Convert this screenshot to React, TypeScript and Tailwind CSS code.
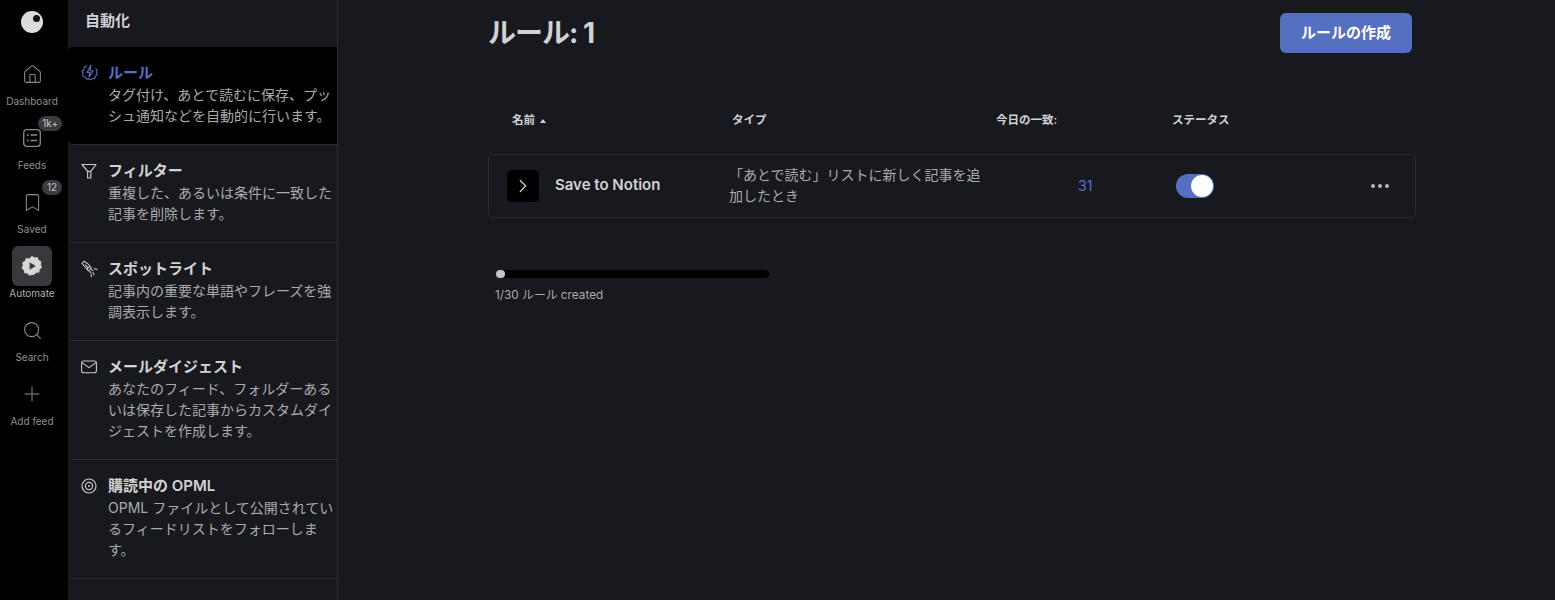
import React from 'react';
import { House, Bookmark, Search, Plus, ChevronRight } from 'lucide-react';

const FeedsIcon = () => (
    <svg width="20" height="20" viewBox="0 0 20 20" fill="none" stroke="currentColor" strokeWidth="1.3" strokeLinecap="round">
        <rect x="1.7" y="1.7" width="16.6" height="16.6" rx="3" />
        <path d="M9 7h5.5M9 12.5h5.5" />
        <circle cx="5.8" cy="7" r="0.9" fill="currentColor" stroke="none" />
        <circle cx="5.8" cy="12.5" r="0.9" fill="currentColor" stroke="none" />
    </svg>
);

const AutomateIcon = () => (
    <svg width="22" height="22" viewBox="0 0 22 22">
        <path fill="#d6d6d8" d="M11 1l2.6 1.6 3-.3 1.2 2.8 2.6 1.5-.6 3 1.2 2.8-2.2 2-.6 3-3 .4L12.8 20l-1.8-.2-2.4.9-2.2-2.1-3-.4-.6-3-2.2-2 1.2-2.8-.6-3 2.6-1.5 1.2-2.8 3 .3z" />
        <path fill="#38393d" d="M8.6 7.2v7.6l6.2-3.8z" />
    </svg>
);

const RuleIcon = () => (
    <svg width="17" height="17" viewBox="0 0 17 17" fill="none" stroke="currentColor" strokeWidth="1.1" strokeLinejoin="round" strokeLinecap="round">
        <path d="M5.6 2L3.6 3l-.4 2.2L1 7.2l1.1 2.4-.3 2.4 2.3 1 1.2 2.1 2.4-.4 1.7 1.1 1.9-1.1 2.4-.2.7-2.3 1.9-1.6-.8-2.4.5-2.3-1.2-1" />
        <path d="M10 1L6 8.4h3.1l-1.2 4.6 4.3-6.3H9z" />
    </svg>
);

const FilterIcon = () => (
    <svg width="16" height="16" viewBox="0 0 16 16" fill="none" stroke="currentColor" strokeWidth="1.2" strokeLinejoin="round">
        <path d="M1 1.5h14L9.8 8.4V15H6.6V8.4z" />
        <path d="M6.6 8.4h3.2" />
    </svg>
);

const SpotlightIcon = () => (
    <svg width="18" height="18" viewBox="0 0 18 18" fill="none" stroke="currentColor" strokeWidth="1.1" strokeLinejoin="round" strokeLinecap="round">
        <path d="M1 3.4L3.2 1.2 7 4l3.4 3.8-3 3L4 7z" />
        <path d="M4.4 5l2.8 2.8M8.4 6.6L6 9M10.6 9.6l1.2 1M8.8 11.4l1 1.2M12 12.6l1 2.4M13.2 8.8l2.8.6M10 14l.4 2.8" />
    </svg>
);

const MailIcon = () => (
    <svg width="16" height="14" viewBox="0 0 16 14" fill="none" stroke="currentColor" strokeWidth="1.1" strokeLinejoin="round">
        <rect x="0.6" y="1" width="14.8" height="11.8" rx="2" />
        <path d="M1 2.6l7 5 7-5" />
    </svg>
);

const OpmlIcon = () => (
    <svg width="16" height="16" viewBox="0 0 16 16" fill="none" stroke="currentColor" strokeWidth="1.2">
        <circle cx="8" cy="8" r="7" />
        <circle cx="8" cy="8" r="3.6" />
        <circle cx="8" cy="8" r="1" fill="currentColor" stroke="none" />
    </svg>
);

const nav = [
    { label: 'Dashboard', icon: <House size={21} strokeWidth={1.2} /> },
    { label: 'Feeds', icon: <FeedsIcon />, badge: '1k+' },
    { label: 'Saved', icon: <Bookmark size={21} strokeWidth={1.2} />, badge: '12' },
    { label: 'Automate', icon: <AutomateIcon />, active: true },
    { label: 'Search', icon: <Search size={21} strokeWidth={1.2} /> },
    { label: 'Add feed', icon: <Plus size={24} strokeWidth={1} /> },
];

const sections = [
    { title: 'ルール', desc: 'タグ付け、あとで読むに保存、プッシュ通知などを自動的に行います。', icon: <RuleIcon />, active: true },
    { title: 'フィルター', desc: '重複した、あるいは条件に一致した記事を削除します。', icon: <FilterIcon /> },
    { title: 'スポットライト', desc: '記事内の重要な単語やフレーズを強調表示します。', icon: <SpotlightIcon /> },
    { title: 'メールダイジェスト', desc: 'あなたのフィード、フォルダーあるいは保存した記事からカスタムダイジェストを作成します。', icon: <MailIcon /> },
    { title: '購読中の OPML', desc: 'OPML ファイルとして公開されているフィードリストをフォローします。', icon: <OpmlIcon /> },
];

const Rail = () => (
    <nav className="w-[68px] shrink-0 bg-black pr-[4px] flex flex-col items-center">
        <div className="h-[54px] w-full pt-[11px] flex justify-center">
            <div className="relative w-[22px] h-[22px] rounded-full bg-[#dcdcdc]">
                <div className="absolute top-[4px] right-[3px] w-[7px] h-[7px] rounded-full bg-[#111]" />
            </div>
        </div>
        {nav.map((item, idx) => (
            <div key={idx} className="relative w-full h-16 flex flex-col items-center">
                <div className={`w-10 h-10 shrink-0 flex items-center justify-center rounded-md text-[#8b8b8e] ${item.active ? 'bg-[#38393d]' : ''}`}>
                    {item.icon}
                </div>
                <span className={`text-[10px] leading-[14px] ${item.active ? 'text-[#b0b0b2]' : 'text-[#8f8f92]'}`}>{item.label}</span>
                {item.badge && (
                    <span className="absolute -top-[2px] right-[2px] h-[15px] min-w-5 px-[4px] rounded-full bg-[#3a3b3e] text-[#c4c4c6] text-[10px] leading-[15px] text-center">
                        {item.badge}
                    </span>
                )}
            </div>
        ))}
    </nav>
);

const SidePanel = () => (
    <aside className="w-[270px] shrink-0 border-r border-[#2c2d31]">
        <h2 className="h-[47px] pl-[17px] pt-[10px] text-[15px] leading-[22px] font-semibold text-[#d2d2d2]">自動化</h2>
        {sections.map((section, idx) => (
            <div key={idx} className={`flex pl-[13px] pr-[3px] pt-[14px] pb-[18px] border-b border-[#2c2d31] rounded-l-[5px] ${section.active ? 'bg-black' : ''}`}>
                <div className={`w-[27px] h-[23px] shrink-0 flex items-center ${section.active ? 'text-[#5570c1]' : 'text-[#c8c8c8]'}`}>
                    {section.icon}
                </div>
                <div className="min-w-0">
                    <div className={`text-[15px] leading-[23px] font-semibold ${section.active ? 'text-[#5570c1]' : 'text-[#d2d2d2]'}`}>{section.title}</div>
                    <p className="text-[14px] leading-[21px] text-[#ababab]">{section.desc}</p>
                </div>
            </div>
        ))}
    </aside>
);

const Main = () => (
    <main className="flex-1 min-w-0 pl-[150px] pr-[139px]">
        <div className="flex items-start justify-between pt-[13px] pr-[4px]">
            <h1 className="text-[28px] leading-10 font-bold tracking-[-1px] text-[#d2d2d2]">ルール: 1</h1>
            <button className="w-[132px] h-10 rounded-md bg-[#5570c1] text-[15px] font-semibold text-white">ルールの作成</button>
        </div>

        <div className="flex items-center h-6 mt-[56px] text-[11.5px] font-semibold text-[#d2d2d2]">
            <div className="w-[244px] pl-[24px] flex items-center gap-[5px]">
                名前
                <span className="w-0 h-0 border-x-[3px] border-x-transparent border-b-[4px] border-b-[#d2d2d2]" />
            </div>
            <div className="w-[264px]">タイプ</div>
            <div className="w-[176px]">今日の一致:</div>
            <div>ステータス</div>
        </div>

        <div className="flex items-center h-16 mt-[21px] pl-[18px] border border-[#2c2d31] rounded-md">
            <div className="w-8 h-8 shrink-0 rounded-[5px] bg-black flex items-center justify-center text-[#d2d2d2]">
                <ChevronRight size={22} strokeWidth={1.3} />
            </div>
            <div className="w-[190px] shrink-0 pl-4 mb-[1px] text-[15px] font-semibold text-[#d2d2d2]">Save to Notion</div>
            <p className="w-[256px] shrink-0 mb-[3px] text-[14px] leading-[21px] text-[#ababab]">「あとで読む」リストに新しく記事を追加したとき</p>
            <div className="w-[93px] shrink-0 pl-[93px] mb-[1px] text-[14px] text-[#5570c1]">31</div>
            <div className="ml-[98px] w-[38px] h-6 shrink-0 rounded-full bg-[#5570c1] flex items-center justify-end pr-[1px]">
                <div className="w-[22px] h-[22px] rounded-full bg-white" />
            </div>
            <div className="ml-[157px] flex gap-[3px]">
                <span className="w-1 h-1 rounded-full bg-[#b8b8b8]" />
                <span className="w-1 h-1 rounded-full bg-[#b8b8b8]" />
                <span className="w-1 h-1 rounded-full bg-[#b8b8b8]" />
            </div>
        </div>

        <div className="mt-[52px] ml-[8px] w-[273px] h-2 rounded-full bg-black">
            <div className="w-[9px] h-2 rounded-full bg-[#c4c4ca]" />
        </div>
        <p className="mt-[9px] ml-[7px] text-[11.8px] leading-4 text-[#ababab]">1/30 ルール created</p>
    </main>
);

const App: React.FC = () => {
    return (
        <div className="flex h-screen overflow-hidden bg-[#18191e] font-['Inter','Noto_Sans_CJK_JP',sans-serif]">
            <Rail />
            <SidePanel />
            <Main />
        </div>
    );
};

export default App;
